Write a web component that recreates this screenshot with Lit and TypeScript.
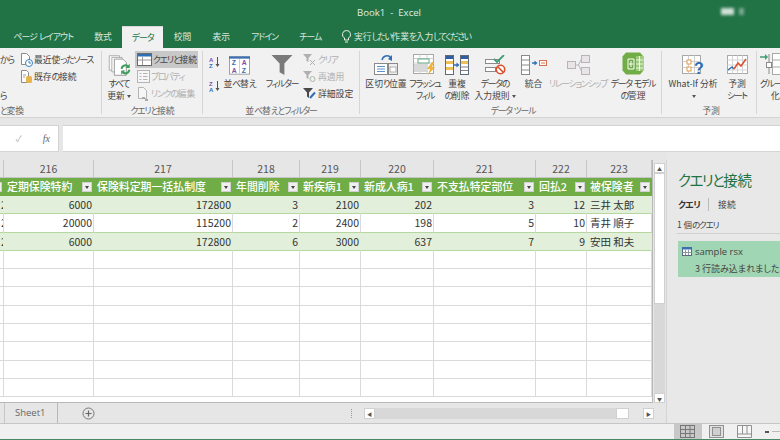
import {LitElement, html, css} from 'lit';
import {customElement} from 'lit/decorators.js';

const tabs = ['ページ レイアウト', '数式', 'データ', '校閲', '表示', 'アドイン', 'チーム'];

const columns = [
    {no: '', w: 4, head: '', vals: ['2', '2', '2']},
    {no: '216', w: 90, head: '定期保険特約', vals: ['6000', '20000', '6000']},
    {no: '217', w: 139, head: '保険料定期一括払制度', vals: ['172800', '115200', '172800']},
    {no: '218', w: 67, head: '年間削除', vals: ['3', '2', '6']},
    {no: '219', w: 61, head: '新疾病1', vals: ['2100', '2400', '3000']},
    {no: '220', w: 73, head: '新成人病1', vals: ['202', '198', '637']},
    {no: '221', w: 102, head: '不支払特定部位', vals: ['3', '5', '7']},
    {no: '222', w: 51, head: '回払2', vals: ['12', '10', '9']},
    {no: '223', w: 65, head: '被保険者', vals: ['三井 太郎', '青井 順子', '安田 和夫'], text: true},
];

const icons = {
    recent: html`<svg width="13" height="14" viewBox="0 0 13 14"><path d="M1.500.5h5l3 3v8h-8z" fill="#fff" stroke="#8a8a8a"/><circle cx="9" cy="10" r="3.500" fill="#fff" stroke="#3b7fc4"/><path d="M9 8v2h2" fill="none" stroke="#3b7fc4"/></svg>`,
    existing: html`<svg width="13" height="14" viewBox="0 0 13 14"><path d="M1.500.5h5l2 2v10h-7z" fill="#fff" stroke="#8a8a8a"/><rect x="6" y="6" width="6" height="7" rx="1.500" fill="#e8b24c"/><path d="M3 5h3M3 7h2" stroke="#a0a0a0"/></svg>`,
    query: html`<svg width="15" height="13" viewBox="0 0 15 13"><rect x=".5" y=".5" width="14" height="12" fill="#fff" stroke="#6a6a6a"/><rect x="1" y="1" width="13" height="2.500" fill="#2f6fb5"/><path d="M1 7h13M5.500 4v8" stroke="#9a9a9a"/></svg>`,
    props: html`<svg width="13" height="13" viewBox="0 0 13 13"><rect x=".5" y=".5" width="12" height="12" fill="#f6f6f6" stroke="#b4b4b4"/><path d="M2.500 3.500h2M2.500 6.500h2M2.500 9.500h2M6 3.500h4.500M6 6.500h4.500M6 9.500h4.500" stroke="#b4b4b4"/></svg>`,
    link: html`<svg width="13" height="14" viewBox="0 0 13 14"><path d="M1.500.5h5l3 3v8h-8z" fill="#f6f6f6" stroke="#b4b4b4"/><path d="M5 11h3M8 13h3" stroke="#a8a8a8" stroke-width="2"/></svg>`,
    clear: html`<svg width="15" height="13" viewBox="0 0 15 13"><path d="M1 1h9L6.500 5v4L4.500 8V5z" fill="#b0b0b0"/><path d="M8 7l5 5M13 7l-5 5" stroke="#b0b0b0"/></svg>`,
    reapply: html`<svg width="15" height="13" viewBox="0 0 15 13"><path d="M1 1h9L6.500 5v4L4.500 8V5z" fill="#b0b0b0"/><circle cx="10.500" cy="9" r="2.500" fill="none" stroke="#a8b8a8"/></svg>`,
    advanced: html`<svg width="15" height="13" viewBox="0 0 15 13"><path d="M1 1h10L7 5.500V11L5 9.500V5.500z" fill="#4a4a4a"/><path d="M8 11l5-5.500" stroke="#2f6fb5" stroke-width="2"/></svg>`,
    refresh: html`<svg class="drop" width="23" height="25" viewBox="0 0 27 26"><path d="M1.500 1.500h12v17h-12z" fill="#fbfbfb" stroke="#a4a4a4"/><path d="M4.500 3.500h12v17h-12z" fill="#fbfbfb" stroke="#a4a4a4"/><path d="M7.500 5.500h10l4 4v15h-14z" fill="#fff" stroke="#8e8e8e"/><path d="M16 17a4.500 4.500 0 0 1 8-2.500M25 18a4.500 4.500 0 0 1-8 2.500" fill="none" stroke="#3f9e5c" stroke-width="2.400"/><path d="M25.500 11v5h-5zM15.500 24v-5h5z" fill="#3f9e5c"/></svg>`,
    sortBig: html`<svg width="21" height="19" viewBox="0 0 23 20" font-family="Liberation Sans" font-size="7.500" font-weight="700"><rect x=".5" y=".5" width="22" height="19" fill="#fff" stroke="#9a9a9a"/><rect x="0" y="0" width="23" height="2.500" fill="#3f6fb0"/><path d="M11.500 3v16" stroke="#c8c8c8"/><text x="3" y="10" fill="#2f6fb5">Z</text><text x="14" y="10" fill="#7b4fa8">A</text><text x="3" y="18" fill="#7b4fa8">A</text><text x="14" y="18" fill="#2f6fb5">Z</text></svg>`,
    funnel: html`<svg width="22" height="20" viewBox="0 0 23 21"><path d="M.5 0h22l-8.500 9v12l-5-3V9z" fill="#7a7a7a"/></svg>`,
    split: html`<svg width="24" height="20" viewBox="0 0 24 20"><path d="M8 5a5 5 0 0 1 9-2" fill="none" stroke="#2f6fb5" stroke-width="1.500"/><path d="M18 0v6l-4-2z" fill="#2f6fb5"/><rect x=".5" y="8.500" width="13" height="11" fill="#fff" stroke="#8a8a8a"/><path d="M3 11.500h8M3 14h8M3 16.500h8" stroke="#5b93cf"/><rect x="14.500" y="8.500" width="9" height="11" fill="#eee" stroke="#8a8a8a"/><rect x="16" y="12" width="6" height="5" fill="#fff" stroke="#b0b0b0"/></svg>`,
    flash: html`<svg width="24" height="21" viewBox="0 0 24 21"><rect x=".5" y=".5" width="20" height="19" fill="#fff" stroke="#a8a8a8"/><path d="M.5 4.500h20M.5 9h20M.5 13.500h20M7 .5v19M14 .5v19" stroke="#cfcfcf"/><rect x="5" y="5" width="11" height="4" fill="#fff" stroke="#6aa886"/><rect x="1" y="10" width="14" height="8" fill="#d8d8d8"/><path d="M19 8l-5 7h3l-2 6 7-8h-3l2-5z" fill="#f0b23a"/></svg>`,
    dup: html`<svg width="24" height="20" viewBox="0 0 24 20"><rect x=".5" y=".5" width="8" height="19" fill="#fff" stroke="#606a78"/><rect x="1" y="1" width="7" height="3" fill="#2f5f9e"/><rect x="1" y="6" width="7" height="3" fill="#eec05a"/><rect x="1" y="12" width="7" height="3" fill="#eec05a"/><rect x="15.500" y=".5" width="8" height="19" fill="#fff" stroke="#606a78"/><rect x="16" y="1" width="7" height="3" fill="#2f5f9e"/><rect x="16" y="6" width="7" height="3" fill="#eec05a"/><path d="M16 12h7M16 15.500h7" stroke="#808080"/><path d="M9 10h3" stroke="#2f6fb5" stroke-width="1.500"/><path d="M11.500 7.500l3 2.500-3 2.500z" fill="#2f6fb5"/></svg>`,
    valid: html`<svg width="21" height="20" viewBox="0 0 21 20"><rect x=".5" y="4.500" width="14" height="4" fill="#fff" stroke="#8a8a8a"/><rect x=".5" y="12.500" width="10" height="4" fill="#fff" stroke="#8a8a8a"/><path d="M9 4l3 3 7-7" fill="none" stroke="#3f9e76" stroke-width="1.800"/><circle cx="15.500" cy="14.500" r="4.200" fill="#fff" stroke="#d9502e" stroke-width="1.600"/><path d="M12.500 11.500l6 6" stroke="#d9502e" stroke-width="1.600"/></svg>`,
    merge: html`<svg width="26" height="20" viewBox="0 0 26 20"><rect x=".5" y=".5" width="8" height="19" fill="#fff" stroke="#8a8a8a"/><path d="M1 5h7M1 10h7M1 15h7" stroke="#8a8a8a"/><path d="M11 8h3" stroke="#2f6fb5" stroke-width="1.500"/><path d="M13.500 5.500l3 2.500-3 2.500z" fill="#2f6fb5"/><rect x="18.500" y="5.500" width="7" height="5" fill="#fff" stroke="#d9704e"/><path d="M20 8h4" stroke="#d9704e"/></svg>`,
    relation: html`<svg width="23" height="20" viewBox="0 0 23 20"><rect x=".5" y="6.500" width="8" height="7" fill="#e8e4e8" stroke="#b8b4b8"/><rect x="14.500" y=".5" width="8" height="7" fill="#e8e4e8" stroke="#b8b4b8"/><rect x="14.500" y="12.500" width="8" height="7" fill="#e8e4e8" stroke="#b8b4b8"/><path d="M8.500 10h3l3-6M11.500 10l3 6" fill="none" stroke="#b8b4b8"/></svg>`,
    model: html`<svg width="22" height="23" viewBox="0 0 22 23"><path d="M4 .5h14l3.500 4v14l-3.500 4H4l-3.500-4v-14z" fill="#70ad47"/><path d="M14 4h7v15h-7z" fill="#9ccb7c"/><path d="M14 8h7M14 12h7M14 16h7M17.500 4v15" stroke="#fff" stroke-width=".8"/><path d="M6 7h6v10H6z" fill="none" stroke="#fff"/><path d="M9 9v6M7 12h4" stroke="#fff"/></svg>`,
    whatIf: html`<svg width="22" height="20" viewBox="0 0 22 20"><rect x=".5" y=".5" width="18" height="18" fill="#fff" stroke="#a8a8a8"/><path d="M.5 6.500h18M.5 12.500h18M6.500 .5v18M12.500 .5v18" stroke="#cfcfcf"/><rect x="5" y="5" width="4" height="4" fill="#fff" stroke="#e09a4a"/><rect x="5" y="12" width="4" height="4" fill="#fff" stroke="#e09a4a"/><text x="12" y="19" font-family="Liberation Sans" font-weight="700" font-size="16" fill="#2f6fb5">?</text></svg>`,
    forecast: html`<svg width="21" height="20" viewBox="0 0 21 20"><rect x=".5" y=".5" width="20" height="18" fill="#fff" stroke="#a8a8a8"/><path d="M.5 5h20M.5 10h20M.5 15h20M5.500 .5v18M10.500 .5v18M15.500 .5v18" stroke="#d4d4d4"/><path d="M1 15l4-3 2 2" fill="none" stroke="#2f6fb5" stroke-width="1.500"/><path d="M7 14l4-6 3 3 5-7" fill="none" stroke="#d9502e" stroke-width="1.500"/></svg>`,
    group: html`<svg width="24" height="22" viewBox="0 0 24 22"><path d="M0 4h7" stroke="#3f9e76" stroke-width="1.500"/><path d="M5 1l3 3-3 3z" fill="#3f9e76"/><path d="M9 1v20" stroke="#8a8a8a"/><rect x="6.500" y="9.500" width="5" height="5" fill="#fff" stroke="#8a8a8a"/><rect x="12.500" y=".5" width="11" height="21" fill="#fff" stroke="#a8a8a8"/><path d="M12.500 7h11M12.500 14h11" stroke="#a8a8a8"/></svg>`,
    tableBlue: html`<svg width="10" height="9" viewBox="0 0 10 9"><rect x=".5" y=".5" width="9" height="8" fill="#fff" stroke="#5a6a7a"/><rect x="0" y="0" width="10" height="2.500" fill="#3f6fb0"/><path d="M.5 5.500h9M3.500 3v5M6.500 3v5" stroke="#8a98a8"/></svg>`,
    bulb: html`<svg width="9" height="13" viewBox="0 0 9 13"><path d="M4.500.5a4 4 0 0 1 2 7.500v2h-4V8a4 4 0 0 1 2-7.500zM3 12h3" fill="none" stroke="#e4efe8"/></svg>`,
};

const sortMini = (top: string, bottom: string, c1: string, c2: string) => html`
    <svg width="12" height="11" viewBox="0 0 12 11" font-family="Liberation Sans" font-size="6" font-weight="700">
        <text x="0" y="5" fill="${c1}">${top}</text><text x="0" y="11" fill="${c2}">${bottom}</text>
        <path d="M8.500 0v9" stroke="#555"/><path d="M6.500 7h4l-2 3z" fill="#555"/>
    </svg>`;

// kana in the reference font is much narrower than kanji, so squeeze just those runs
const jp = (text: string) => text.split(/([\u3040-\u30ff]+)/).map((part, i) =>
    i % 2 ? html`<span class="k">${part}</span>` : part);

const caret = html`<span class="caret"></span>`;

@customElement('app-root')
export class AppRoot extends LitElement {

    static override styles = css`
        :host {
            display: block;
            width: 780px;
            height: 440px;
            overflow: hidden;
            background: #e6e6e6;
            color: #444;
            font-family: "Noto Sans CJK JP", "Noto Sans", sans-serif;
            font-feature-settings: "palt";
            font-size: 8.800px;
        }
        svg { display: block; flex: none; }
        .k { letter-spacing: -1.200px; }

        .title {
            height: 25px;
            background: #217346;
            color: #dfeee5;
            display: flex;
            align-items: center;
            justify-content: center;
            font-family: "Open Sans", sans-serif;
            font-size: 9.600px;
            position: relative;
            padding: 0 2px 1px 0;
            box-sizing: border-box;
        }
        .title span { white-space: pre; }
        .user {
            position: absolute;
            right: 36px;
            top: 8px;
            display: flex;
            gap: 5px;
            filter: blur(1.500px);
        }
        .user i { display: block; height: 7px; width: 13px; background: #cfe0d6; }
        .user i + i { width: 5px; background: #7fa892; }
        .tabs {
            height: 23px;
            background: #217346;
            color: #d8e8de;
            display: flex;
            padding-left: 3px;
            box-sizing: border-box;
        }
        .tabs .k { letter-spacing: -.85px; }
        .tab {
            padding: 0 10.500px;
            line-height: 24px;
            white-space: nowrap;
        }
        .tab.on {
            background: #f1f1f1;
            color: #217346;
            margin-top: 1px;
            line-height: 22px;
            padding: 0 9.500px;
            border-top: 1px solid #d8d8d8;
        }
        .tell {
            display: flex;
            align-items: center;
            gap: 3px;
            margin-left: 10px;
            white-space: nowrap;
        }
        .tabs .tell .k { letter-spacing: -1.450px; }

        .ribbon {
            height: 70px;
            background: #f1f1f1;
            border-bottom: 1px solid #d4d4d4;
            box-sizing: border-box;
            display: flex;
            overflow: hidden;
            white-space: nowrap;
        }
        .group {
            flex: none;
            box-sizing: border-box;
            height: 63px;
            margin-top: 3px;
            border-right: 1px solid #d6d6d6;
        }
        .items { height: 54px; display: flex; }
        .label {
            height: 12px;
            line-height: 12px;
            text-align: center;
            color: #666;
        }
        .label.left { text-align: left; }
        .big {
            display: flex;
            flex-direction: column;
            align-items: center;
            text-align: center;
            line-height: 12px;
            flex: none;
        }
        .big .ic {
            height: 24px;
            display: flex;
            align-items: flex-end;
            justify-content: center;
            margin-bottom: 3px;
        }
        .big.off { color: #b0b0b0; }
        .drop { margin-bottom: -3px; }
        .small { display: flex; flex-direction: column; }
        .row {
            height: 17px;
            display: flex;
            align-items: center;
            gap: 1px;
            padding: 0 2px;
            box-sizing: border-box;
        }
        .row.sel { background: #c8c8c8; }
        .row.off { color: #b0b0b0; }
        .clip { width: 18px; }
        .clip .row { padding: 0; }
        .clip .row:last-child { margin-top: 2px; }
        .sort-icons { width: 21px; padding: 6px 0 0 6px; box-sizing: border-box; gap: 13px; }
        .filter-gap { width: 10px; }
        .adv { margin-left: 1px; }
        .conn { width: 63px; }
        .caret {
            display: inline-block;
            border: 2.500px solid transparent;
            border-top: 3px solid #555;
            border-bottom: 0;
            vertical-align: middle;
            margin-left: 2px;
        }
        .last-big { width: 30px; align-items: flex-start; }
        .last-big .indent { padding-left: 11px; }

        .formula {
            height: 27px;
            margin: 7px 0 8px;
            display: flex;
            gap: 4px;
        }
        .fx-box, .fx-input {
            background: #fff;
            border: 1px solid #d4d4d4;
            border-left: 0;
            box-sizing: border-box;
        }
        .fx-box {
            width: 59px;
            display: flex;
            align-items: center;
            justify-content: flex-end;
            gap: 21px;
            padding-right: 8px;
            color: #b0b0b0;
        }
        .fx-box em {
            font-family: "Liberation Serif", serif;
            font-size: 10px;
            color: #666;
        }
        .fx-input { flex: 1; border-right: 0; }

        .main { height: 263px; display: flex; }
        .sheet { width: 667px; flex: none; display: flex; flex-direction: column; border-right: 1px solid #d4d4d4; box-sizing: border-box; }
        .work { height: 243px; display: flex; }
        .grid {
            width: 653px;
            margin-right: 1px;
            flex: none;
            background: #fff;
            overflow: hidden;
            border-right: 1px solid #b8b8b8;
            border-bottom: 1px solid #b8b8b8;
            box-sizing: border-box;
        }
        .cols { display: flex; height: 18px; background: #e6e6e6; border-bottom: 1px solid #c6c6c6; box-sizing: border-box; }
        .col {
            box-sizing: border-box;
            flex: none;
            text-align: center;
            line-height: 17px;
            font-size: 10.500px;
            color: #555;
            border-right: 1px solid #c6c6c6;
        }
        .tr { display: flex; height: 18.300px; box-sizing: border-box; }
        .td {
            flex: none;
            box-sizing: border-box;
            overflow: hidden;
            white-space: nowrap;
            padding: 0 1px;
            text-align: right;
            font-size: 10.500px;
            line-height: 17px;
            color: #333;
            border-right: 1px solid #dadada;
            border-bottom: 1px solid #dadada;
        }
        .td.txt { text-align: left; padding-left: 3px; }
        .tr.hd { background: #70ad47; height: 18px; }
        .hd .td {
            position: relative;
            border: 0;
            color: #fff;
            text-align: left;
            font-size: 10.900px;
            font-weight: 500;
            padding-left: 3px;
        }
        .tr.a .td { background: #e2efda; border-color: #e2efda; border-bottom-color: #b7d7a0; }
        .tr.b .td { background: #fff; border-bottom-color: #b7d7a0; }
        .filter {
            position: absolute;
            right: 2px;
            top: 4px;
            width: 10px;
            height: 10px;
            background: #efefef;
            border: 1px solid #d0d0d0;
            box-sizing: border-box;
        }
        .filter::after {
            content: "";
            position: absolute;
            left: 2px;
            top: 3px;
            border: 2.500px solid transparent;
            border-top: 3px solid #444;
            border-bottom: 0;
        }

        .vbar { width: 11px; flex: none; display: flex; flex-direction: column; padding-top: 3px; }
        .arrow {
            width: 11px;
            height: 10px;
            box-sizing: border-box;
            background: #fff;
            border: 1px solid #d0d0d0;
            flex: none;
            display: flex;
            align-items: center;
            justify-content: center;
            font-size: 5px;
            line-height: 1;
            color: #555;
        }
        .hbar .arrow { height: 11px; }
        .thumb { width: 11px; height: 131px; background: #fff; border: 1px solid #d0d0d0; box-sizing: border-box; flex: none; }
        .track { flex: 1; background: #d8d8d8; }

        .tabbar {
            height: 20px;
            display: flex;
            align-items: center;
            box-sizing: border-box;
            color: #666;
        }
        .sheet-tab {
            margin-left: 4px;
            width: 54px;
            height: 100%;
            display: flex;
            align-items: center;
            padding: 0 0 1px 10px;
            box-sizing: border-box;
            border-left: 1px solid #c6c6c6;
            border-right: 1px solid #b8b8b8;
            font-family: "Open Sans", sans-serif;
            font-size: 9.500px;
        }
        .plus { margin-left: 24px; }
        .dots { margin-left: 256px; width: 1px; height: 9px; border-left: 1px dotted #999; }
        .hbar { margin-left: 11px; width: 290px; height: 11px; display: flex; }
        .hthumb { width: 13px; height: 11px; background: #fff; border: 1px solid #d0d0d0; box-sizing: border-box; margin-right: 14px; flex: none; }

        .pane { flex: 1; margin-top: -8px; padding: 18px 0 0 11px; overflow: hidden; white-space: nowrap; background: #e8e8e8; }
        .pane h2 {
            margin: 0;
            font-size: 14.500px;
            font-weight: 400;
            color: #217346;
            line-height: 20px;
            letter-spacing: -.3px;
        }
        .pane h2 .k { letter-spacing: -1.600px; }
        .ptabs { display: flex; align-items: center; margin-top: 7px; height: 14px; }
        .ptabs b { font-weight: 700; color: #333; padding-right: 8px; border-right: 1px solid #bbb; margin-right: 9px; }
        .ptabs b .k { letter-spacing: -.6px; }
        .count { margin-top: 7px; padding-bottom: 2px; margin-left: -1px; border-bottom: 1px solid #d0d0d0; line-height: 13px; font-size: 8.500px; }
        .card {
            background: #a0d6b4;
            margin-top: 7px;
            height: 36px;
            padding: 2px 0 0 4px;
            box-sizing: border-box;
            display: grid;
            grid-template-columns: 13px auto;
            line-height: 16px;
            align-items: center;
            font-size: 9px;
        }
        .card span:last-child { grid-column: 2; }
        .sample { font-family: "Open Sans", sans-serif; font-size: 9.500px; }

        .status {
            height: 16px;
            border-top: 1px solid #c6c6c6;
            background: #f0f0f0;
            box-sizing: border-box;
            display: flex;
            justify-content: flex-end;
            align-items: center;
        }
        .view { width: 28.500px; height: 15px; display: flex; align-items: center; justify-content: center; }
        .view.on { background: #c8c8c8; }
        .zoom { width: 15px; display: flex; align-items: center; gap: 1px; margin-left: 6px; }
        .zoom i { display: block; height: 1px; background: #bbb; flex: 1; }
        .zoom i:first-child { flex: none; width: 4px; height: 2px; background: #555; margin-right: 2px; }
        .edge { height: 1px; background: #217346; opacity: .8; }
    `;

    small(icon: unknown, text: string, cls = '') {
        return html`<div class="row ${cls}">${icon}<span>${jp(text)}</span></div>`;
    }

    big(icon: unknown, lines: string[], w: number, cls = '', drop = false) {
        return html`
            <div class="big ${cls}" style="width:${w}px">
                <div class="ic">${icon}</div>
                ${lines.map((l, i) => html`<div>${jp(l)}${drop && i === lines.length - 1 ? caret : ''}</div>`)}
            </div>`;
    }

    renderRibbon() {
        return html`
            <div class="ribbon">
                <div class="group" style="width:102px">
                    <div class="items">
                        <div class="small clip">
                            <div class="row">${jp('から')}</div>
                            <div class="row"></div>
                            <div class="row">${jp('ら')}</div>
                        </div>
                        <div class="small">
                            ${this.small(icons.recent, '最近使ったソース')}
                            ${this.small(icons.existing, '既存の接続')}
                        </div>
                    </div>
                    <div class="label left">${jp('と変換')}</div>
                </div>
                <div class="group" style="width:101px;padding-left:1px">
                    <div class="items">
                        ${this.big(icons.refresh, ['すべて', '更新'], 32, '', true)}
                        <div class="small conn">
                            ${this.small(icons.query, 'クエリと接続', 'sel')}
                            ${this.small(icons.props, 'プロパティ', 'off')}
                            ${this.small(icons.link, 'リンクの編集', 'off')}
                        </div>
                    </div>
                    <div class="label">${jp('クエリと接続')}</div>
                </div>
                <div class="group" style="width:157px">
                    <div class="items">
                        <div class="small sort-icons">
                            ${sortMini('A', 'Z', '#7b4fa8', '#2f6fb5')}
                            ${sortMini('Z', 'A', '#7b4fa8', '#2f6fb5')}
                        </div>
                        ${this.big(icons.sortBig, ['並べ替え'], 31)}
                        <div class="filter-gap"></div>
                        ${this.big(icons.funnel, ['フィルター'], 34)}
                        <div class="small adv">
                            ${this.small(icons.clear, 'クリア', 'off')}
                            ${this.small(icons.reapply, '再適用', 'off')}
                            ${this.small(icons.advanced, '詳細設定')}
                        </div>
                    </div>
                    <div class="label">${jp('並べ替えとフィルター')}</div>
                </div>
                <div class="group" style="width:302px;padding-left:5px">
                    <div class="items">
                        ${this.big(icons.split, ['区切り位置'], 42)}
                        ${this.big(icons.flash, ['フラッシュ', 'フィル'], 36)}
                        ${this.big(icons.dup, ['重複', 'の削除'], 28)}
                        ${this.big(icons.valid, ['データの', '入力規則'], 48, '', true)}
                        ${this.big(icons.merge, ['統合'], 29)}
                        ${this.big(icons.relation, ['リレーションシップ'], 60, 'off')}
                        ${this.big(icons.model, ['データ モデル', 'の管理'], 50)}
                    </div>
                    <div class="label">${jp('データ ツール')}</div>
                </div>
                <div class="group" style="width:95px;padding-left:4px">
                    <div class="items">
                        ${this.big(icons.whatIf, ['What-If 分析', ''], 54, '', true)}
                        ${this.big(icons.forecast, ['予測', 'シート'], 34)}
                    </div>
                    <div class="label">${jp('予測')}</div>
                </div>
                <div class="group" style="width:40px;border:0;padding-left:3px">
                    <div class="items">
                        <div class="big last-big">
                            <div class="ic">${icons.group}</div>
                            <div>${jp('グルー')}</div>
                            <div class="indent">化${caret}</div>
                        </div>
                    </div>
                </div>
            </div>`;
    }

    renderGrid() {
        const rows = Array.from({length: 8});
        return html`
            <div class="grid">
                <div class="cols">
                    ${columns.map((c) => html`<div class="col" style="width:${c.w}px">${c.no}</div>`)}
                </div>
                <div class="tr hd">
                    ${columns.map((c) => html`
                        <div class="td" style="width:${c.w}px">${c.head}<span class="filter"></span></div>`)}
                </div>
                ${[0, 1, 2].map((r) => html`
                    <div class="tr ${r % 2 ? 'b' : 'a'}">
                        ${columns.map((c) => html`
                            <div class="td ${c.text ? 'txt' : ''}" style="width:${c.w}px">${c.vals[r]}</div>`)}
                    </div>`)}
                ${rows.map(() => html`
                    <div class="tr">
                        ${columns.map((c) => html`<div class="td" style="width:${c.w}px"></div>`)}
                    </div>`)}
            </div>`;
    }

    override render() {
        return html`
            <div class="title">
                <span>Book1  -  Excel</span>
                <div class="user"><i></i><i></i></div>
            </div>
            <div class="tabs">
                ${tabs.map((t) => html`<div class="tab ${t === 'データ' ? 'on' : ''}">${jp(t)}</div>`)}
                <div class="tell">${icons.bulb}<span>${jp('実行したい作業を入力してください')}</span></div>
            </div>
            ${this.renderRibbon()}
            <div class="formula">
                <div class="fx-box"><span>✓</span><em>fx</em></div>
                <div class="fx-input"></div>
            </div>
            <div class="main">
                <div class="sheet">
                    <div class="work">
                        ${this.renderGrid()}
                        <div class="vbar">
                            <div class="arrow">▲</div>
                            <div class="thumb"></div>
                            <div class="track"></div>
                            <div class="arrow">▼</div>
                        </div>
                    </div>
                    <div class="tabbar">
                        <div class="sheet-tab">Sheet1</div>
                        <svg class="plus" width="13" height="13" viewBox="0 0 13 13"><circle cx="6.500" cy="6.500" r="5.500" fill="none" stroke="#777"/><path d="M3.500 6.500h6M6.500 3.500v6" stroke="#666" stroke-width="1.200"/></svg>
                        <div class="dots"></div>
                        <div class="hbar">
                            <div class="arrow">◀</div>
                            <div class="track"></div>
                            <div class="hthumb"></div>
                            <div class="arrow">▶</div>
                        </div>
                    </div>
                </div>
                <div class="pane">
                    <h2>${jp('クエリと接続')}</h2>
                    <div class="ptabs"><b>${jp('クエリ')}</b><span>接続</span></div>
                    <div class="count">${jp('1 個のクエリ')}</div>
                    <div class="card">
                        ${icons.tableBlue}<span class="sample">sample rsx</span>
                        <span>3 行読み込まれました。</span>
                    </div>
                </div>
            </div>
            <div class="status">
                <div class="view on"><svg width="15" height="13" viewBox="0 0 15 13"><rect x=".5" y=".5" width="14" height="12" fill="none" stroke="#777"/><path d="M.5 4.500h14M.5 8.500h14M5.500 .5v12M10 .5v12" stroke="#777"/></svg></div>
                <div class="view"><svg width="15" height="13" viewBox="0 0 15 13"><rect x=".5" y=".5" width="14" height="12" fill="#e0e0e0" stroke="#909090"/><rect x="3.500" y="2.500" width="8" height="8" fill="#cfcfcf" stroke="#909090"/></svg></div>
                <div class="view"><svg width="15" height="13" viewBox="0 0 15 13"><path d="M.5.500h14v12H.500z" fill="#f6f6f6" stroke="#909090"/><path d="M.5 9h14M5.500 .5V9M10 .5V9" stroke="#909090"/></svg></div>
                <div class="zoom"><i></i><i></i></div>
            </div>
            <div class="edge"></div>
        `;
    }
}

declare global {
    interface HTMLElementTagNameMap {
        'app-root': AppRoot,
    }
}
